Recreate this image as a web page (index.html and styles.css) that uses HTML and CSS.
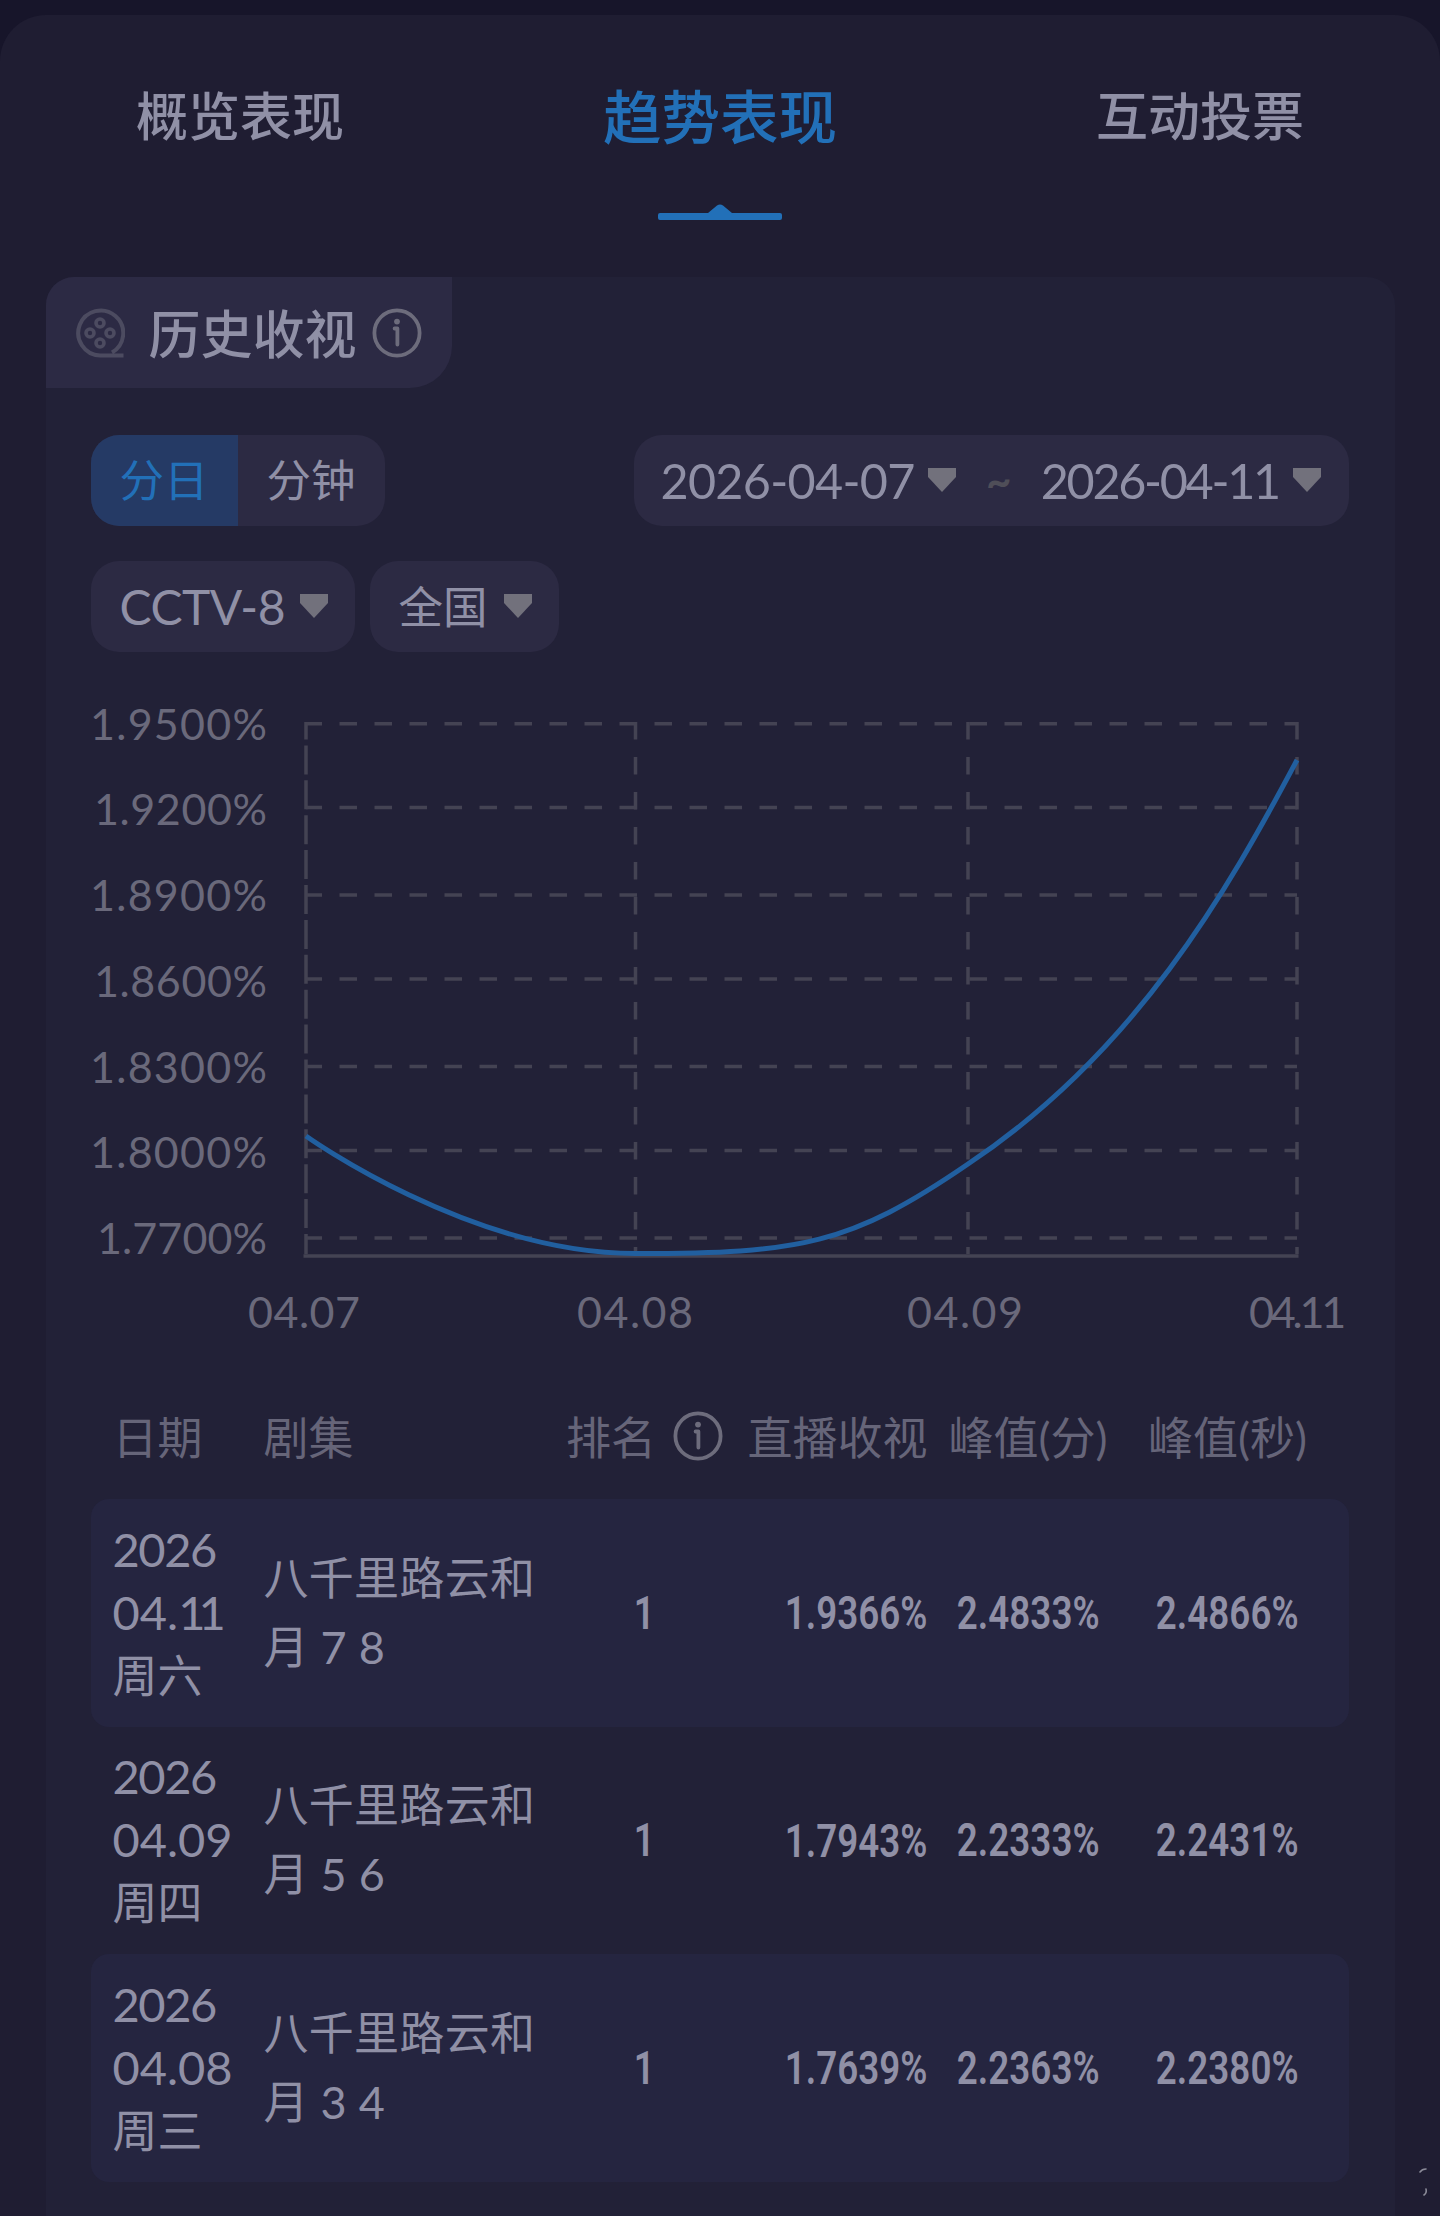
FILE: index.html
```html
<!DOCTYPE html>
<html lang="zh-CN">
<head>
  <meta charset="UTF-8">
  <meta name="viewport" content="width=device-width, initial-scale=1.0">
  <title>趋势表现</title>
  <link rel="stylesheet" href="styles.css">
</head>
<body>

  <!-- 公用图标 -->
  <svg class="sprite" aria-hidden="true">
    <symbol id="icon-info" viewBox="0 0 50 50">
      <circle cx="25" cy="25" r="22.6" fill="none" stroke="currentColor" stroke-width="3.8"/>
      <circle cx="25" cy="13.6" r="2.9" fill="currentColor"/>
      <path d="M22.6 20.5H25.4V36.5" fill="none" stroke="currentColor" stroke-width="3.8" stroke-linecap="round" stroke-linejoin="round"/>
    </symbol>
    <symbol id="icon-arrow" viewBox="0 0 30 26">
      <path d="M1 1H29V10L15 25L1 10Z" fill="currentColor"/>
    </symbol>
  </svg>

  <div class="panel">
    <nav class="tabs">
      <a class="tab">概览表现</a>
      <a class="tab active">趋势表现
        <svg class="tab-line" viewBox="0 0 124 17"><path d="M2 9H50L59 1.5Q62 -.5 65 1.5L74 9H122Q124 9 124 11V14Q124 16 122 16H2Q0 16 0 14V11Q0 9 2 9Z" fill="currentColor"/></svg>
      </a>
      <a class="tab">互动投票</a>
    </nav>

    <section class="card">
      <h2 class="card-title">
        <svg class="icon-film" viewBox="0 0 50 50" fill="none" stroke="currentColor">
          <path d="M48.5 47.5H25A22.5 22.5 0 1 1 37 44.5" stroke-width="4"/>
          <circle cx="25" cy="15" r="4" stroke-width="3.6"/>
          <circle cx="15" cy="25" r="4" stroke-width="3.6"/>
          <circle cx="35" cy="25" r="4" stroke-width="3.6"/>
          <circle cx="25" cy="35" r="4" stroke-width="3.6"/>
        </svg>
        <span>历史收视</span>
        <svg class="icon-info"><use href="#icon-info"/></svg>
      </h2>

      <div class="filters">
        <div class="filter-row">
          <div class="segment">
            <span class="segment-item active">分日</span>
            <span class="segment-item">分钟</span>
          </div>
          <div class="pill dates">
            <span class="date">2026-04-07</span>
            <svg class="arrow"><use href="#icon-arrow"/></svg>
            <span class="tilde">~</span>
            <span class="date end">2026-04-11</span>
            <svg class="arrow"><use href="#icon-arrow"/></svg>
          </div>
        </div>
        <div class="filter-row start">
          <div class="pill channel"><span>CCTV-8</span><svg class="arrow"><use href="#icon-arrow"/></svg></div>
          <div class="pill region"><span>全国</span><svg class="arrow"><use href="#icon-arrow"/></svg></div>
        </div>
      </div>

      <svg class="chart" viewBox="0 0 1258 660">
        <g class="grid">
          <path d="M215 33.75H1206M215 117.5H1206M215 205H1206M215 289H1206M215 376.5H1206M215 460.5H1206M215 548H1206"/>
          <path class="cols" d="M544.5 32V564M877 32V564M1206 32V564"/>
          <path class="axis-y" d="M215 32V564"/>
          <path class="axis-x" d="M212.5 566H1207.5"/>
        </g>
        <path class="curve" d="M215 446C215 446 379 563.5 544.5 563.5C709 563.5 759 555 877 474C1045 362 1137 200 1206 70"/>
        <g class="labels-y">
          <text x="-1" y="50" textLength="177">1.9500%</text>
          <text x="3" y="135" textLength="173">1.9200%</text>
          <text x="-1" y="221" textLength="177">1.8900%</text>
          <text x="3" y="307" textLength="173">1.8600%</text>
          <text x="-1" y="393" textLength="177">1.8300%</text>
          <text x="-1" y="478" textLength="177">1.8000%</text>
          <text x="6" y="564" textLength="170">1.7700%</text>
        </g>
        <g class="labels-x">
          <text x="157" y="638" textLength="112">04.07</text>
          <text x="486" y="638" textLength="116">04.08</text>
          <text x="816" y="638" textLength="116">04.09</text>
          <text class="last" x="1158" y="638">04.11</text>
        </g>
      </svg>

      <div class="table">
        <div class="row head">
          <div>日期</div>
          <div>剧集</div>
          <div class="rank">排名<svg class="icon-info"><use href="#icon-info"/></svg></div>
          <div class="live">直播收视</div>
          <div class="peak">峰值(分)</div>
          <div class="peak">峰值(秒)</div>
        </div>
        <div class="row striped">
          <div class="day"><span class="year">2026</span><br>04.<span class="ones">11</span><br><span class="week">周六</span></div>
          <div class="name">八千里路云和月 7 8</div>
          <div class="rank"><span class="num">1</span></div>
          <div class="live"><span class="num">1.9366%</span></div>
          <div class="peak"><span class="num">2.4833%</span></div>
          <div class="peak"><span class="num">2.4866%</span></div>
        </div>
        <div class="row">
          <div class="day"><span class="year">2026</span><br>04.09<br><span class="week">周四</span></div>
          <div class="name">八千里路云和月 5 6</div>
          <div class="rank"><span class="num">1</span></div>
          <div class="live"><span class="num">1.7943%</span></div>
          <div class="peak"><span class="num">2.2333%</span></div>
          <div class="peak"><span class="num">2.2431%</span></div>
        </div>
        <div class="row striped">
          <div class="day"><span class="year">2026</span><br>04.08<br><span class="week">周三</span></div>
          <div class="name">八千里路云和月 3 4</div>
          <div class="rank"><span class="num">1</span></div>
          <div class="live"><span class="num">1.7639%</span></div>
          <div class="peak"><span class="num">2.2363%</span></div>
          <div class="peak"><span class="num">2.2380%</span></div>
        </div>
      </div>
    </section>

    <svg class="mark" viewBox="0 0 12 30" fill="none" stroke="#8b8b98" stroke-width="1.6" stroke-linecap="round">
      <path d="M2 5Q4 2 8 2M6 28Q9 26 8 22"/>
    </svg>
  </div>

</body>
</html>
```
FILE: styles.css
```css
* {
  margin: 0;
  padding: 0;
  box-sizing: border-box;
}

body {
  background-color: #17152a;
  color: #9090a6;
  font-family: Lato, "Noto Sans CJK SC", sans-serif;
  font-size: 45px;
  height: 2216px;
  padding-top: 15px;
  overflow: hidden;
}

.sprite {
  display: none;
}

/* 主面板 */
.panel {
  position: relative;
  height: 2201px;
  background-color: #1f1d32;
  border-radius: 46px 46px 0 0;
}

/* 顶部标签 */
.tabs {
  display: grid;
  grid-template-columns: repeat(3, 1fr);
  height: 262px;
  padding-top: 61px;
}

.tab {
  display: flex;
  flex-direction: column;
  align-items: center;
  height: 146px;
  font-size: 52px;
  font-weight: 500;
  line-height: 80px;
}

.tab.active {
  color: #2270b8;
  font-size: 58.5px;
}

.tab-line {
  flex-shrink: 0;
  width: 124px;
  height: 17px;
  margin-top: 48px;
}

/* 卡片 */
.card {
  width: 1349px;
  height: 1939px;
  margin: 0 auto;
  background-color: #222137;
  border-radius: 28px 28px 0 0;
}

.card-title {
  display: flex;
  align-items: center;
  width: 406px;
  height: 111px;
  padding-left: 29px;
  background-color: #2c2a44;
  border-radius: 28px 0 42px 0;
  font-size: 52px;
  font-weight: 500;
}

.card-title span {
  margin: 0 15px 3px 24px;
}

.icon-film {
  width: 50px;
  height: 50px;
  color: #4c4b60;
}

.icon-info {
  width: 50px;
  height: 50px;
  color: #6d6c7c;
}

/* 筛选 */
.filters {
  display: flex;
  flex-direction: column;
  gap: 35px;
  padding: 47px 46px 0 45px;
}

.filter-row {
  display: flex;
  justify-content: space-between;
  height: 91px;
  font-size: 44.5px;
}

.filter-row.start {
  justify-content: flex-start;
  gap: 15px;
}

.segment {
  display: flex;
  width: 294px;
  border-radius: 28px;
  overflow: hidden;
  background-color: #2c2a43;
}

.segment-item {
  flex: 1;
  text-align: center;
  line-height: 89px;
}

.segment-item.active {
  background-color: #253a65;
  color: #2270b8;
}

.pill {
  display: flex;
  align-items: center;
  justify-content: space-between;
  padding: 0 26px 1px 29px;
  border-radius: 28px;
  background-color: #2c2a43;
  line-height: 89px;
}

.pill.channel {
  width: 264px;
  font-size: 48px;
  letter-spacing: -0.5px;
}

.pill.region {
  width: 189px;
}

.pill.dates {
  width: 715px;
  padding: 0 27px 1px;
  font-size: 48.5px;
}

.date {
  width: 252px;
  letter-spacing: -0.7px;
  white-space: nowrap;
}

.date.end {
  width: 236px;
  letter-spacing: -2.3px;
}

.arrow {
  width: 30px;
  height: 26px;
  color: #72717c;
}

.tilde {
  width: 26px;
  margin: 0 14px;
  font-weight: 700;
  font-size: 44px;
  color: #4f4e58;
}

/* 折线图 */
.chart {
  display: block;
  width: 1258px;
  height: 660px;
  margin: 38px 0 0 45px;
  overflow: visible;
}

.grid path {
  fill: none;
  stroke: #444353;
  stroke-width: 3.5;
  stroke-dasharray: 17.5 17.5;
  stroke-dashoffset: 1.5;
}

.grid .cols {
  stroke-dashoffset: 0;
}

.grid .axis-y {
  stroke-dasharray: 29 5.9;
  stroke-dashoffset: 11.5;
}

.grid .axis-x {
  stroke-dasharray: none;
}

.curve {
  fill: none;
  stroke: #215f9f;
  stroke-width: 5;
}

.labels-y,
.labels-x {
  fill: #6a697b;
  font-size: 43px;
}

.labels-x .last {
  letter-spacing: -3.2px;
}

/* 表格 */
.table {
  margin: 26px 46px 0 45px;
}

.row {
  display: grid;
  grid-template-columns: 151px 289px 184px 191px 201px 198px;
  align-items: center;
  height: 227.5px;
  padding-left: 22px;
  border-radius: 18px;
}

.row.striped {
  background-color: #252540;
}

.row.head {
  height: 123px;
  padding-bottom: 4px;
  color: #666579;
  font-size: 45px;
}

.row.head .rank {
  gap: 17px;
}

.rank,
.peak {
  display: flex;
  align-items: center;
  justify-content: center;
}

.live {
  text-align: right;
}

.day {
  line-height: 63px;
  font-size: 47px;
}

.year {
  letter-spacing: -1.4px;
}

.ones {
  letter-spacing: -7px;
}

.week {
  font-size: 45px;
}

.name {
  width: 276px;
  line-height: 69px;
  letter-spacing: 0.3px;
}

/* 窄体数字 */
.num {
  display: inline-block;
  font-family: Roboto, sans-serif;
  font-size: 46px;
  font-weight: 600;
  transform: scaleX(0.8);
}

.live .num {
  transform-origin: right;
}

.mark {
  position: absolute;
  left: 1418px;
  top: 2152px;
  width: 12px;
  height: 30px;
}
```
